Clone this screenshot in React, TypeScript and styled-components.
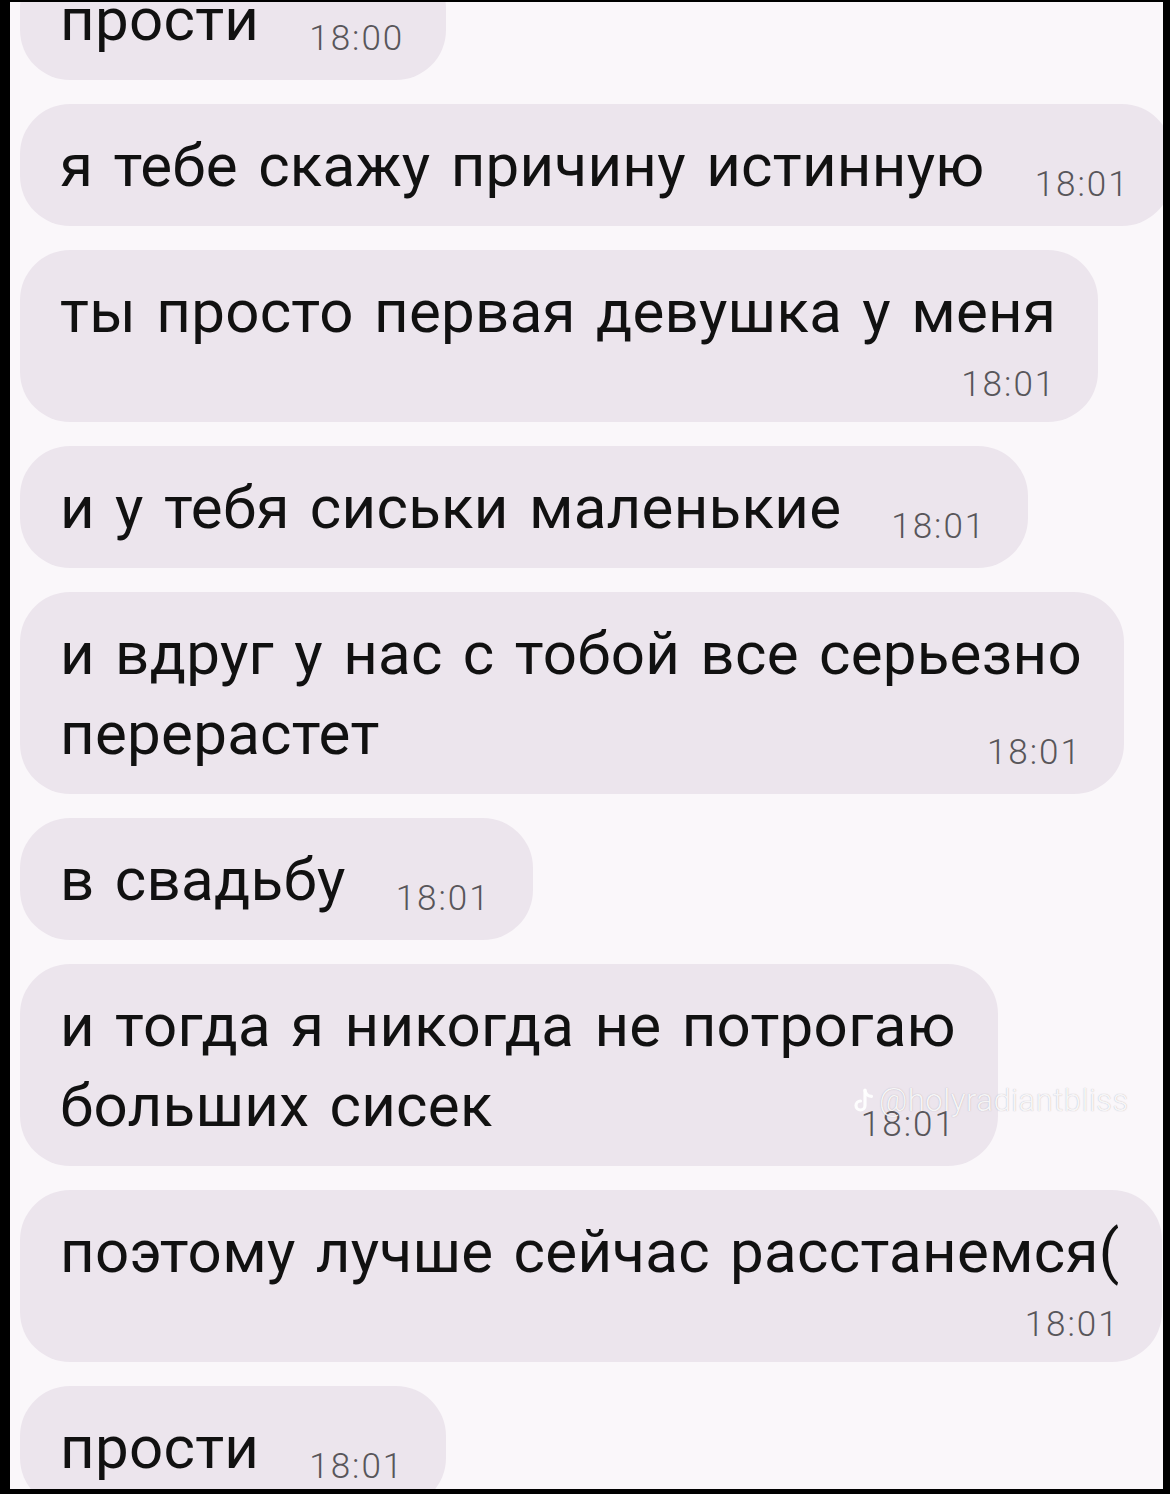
import React from "react";
import styled, { createGlobalStyle } from "styled-components";

const GlobalStyle = createGlobalStyle`
  html, body {
    margin: 0;
    padding: 0;
    background: #000;
  }
  body {
    font-family: Roboto, "Noto Sans", "Liberation Sans", sans-serif;
  }
`;

type Message = {
  lines: string[];
  time: string;
  // where the timestamp sits: after the last line, or on its own row below
  timeAt: "inline" | "below";
};

const messages: Message[] = [
  { lines: ["прости"], time: "18:00", timeAt: "inline" },
  { lines: ["я тебе скажу причину истинную"], time: "18:01", timeAt: "inline" },
  { lines: ["ты просто первая девушка у меня"], time: "18:01", timeAt: "below" },
  { lines: ["и у тебя сиськи маленькие"], time: "18:01", timeAt: "inline" },
  { lines: ["и вдруг у нас с тобой все серьезно", "перерастет"], time: "18:01", timeAt: "inline" },
  { lines: ["в свадьбу"], time: "18:01", timeAt: "inline" },
  { lines: ["и тогда я никогда не потрогаю", "больших сисек"], time: "18:01", timeAt: "inline" },
  { lines: ["поэтому лучше сейчас расстанемся("], time: "18:01", timeAt: "below" },
  { lines: ["прости"], time: "18:01", timeAt: "inline" },
];

const Frame = styled.div`
  width: 1170px;
  height: 1494px;
  box-sizing: border-box;
  padding: 2px 7px 5px 10px;
  background: #000;
`;

const Screen = styled.div`
  position: relative;
  height: 100%;
  overflow: hidden;
  background: #faf7fa;
`;

const Feed = styled.div`
  display: flex;
  flex-direction: column;
  align-items: flex-start;
  gap: 24px;
  margin-top: -44px;
  padding-left: 10px;
`;

const Bubble = styled.div`
  flex-shrink: 0;
  box-sizing: border-box;
  padding: 22px 42px 20px 40px;
  border-radius: 50px;
  background: #ece5ed;
  color: #111;
  white-space: nowrap;
`;

const Line = styled.div`
  display: flex;
  align-items: baseline;
  justify-content: space-between;
  font-size: 60px;
  line-height: 80px;
  letter-spacing: 0.3px;
  word-spacing: 5px;
`;

const Time = styled.span<{ $drop: number }>`
  flex-shrink: 0;
  margin-left: 50px;
  font-size: 35px;
  font-weight: 300;
  letter-spacing: 2px;
  word-spacing: 0;
  line-height: 1;
  color: #58565a;
  transform: translateY(${(p) => p.$drop}px);
`;

const TimeRow = styled.div`
  display: flex;
  justify-content: flex-end;
  align-items: flex-end;
  height: 50px;
`;

const Watermark = styled.div`
  position: absolute;
  left: 842px;
  top: 1080px;
  display: flex;
  align-items: center;
  gap: 3px;
  font-size: 31px;
  font-weight: 300;
  letter-spacing: 0.5px;
  color: rgba(255, 255, 255, 0.9);
  text-shadow: 0 0 1px rgba(110, 100, 115, 0.5);
`;

const NoteLogo = () => (
  <svg width="24" height="26" viewBox="0 0 24 26" fill="none">
    <path
      d="M13 2v15.5a4.5 4.5 0 1 1-4.5-4.5"
      stroke="rgba(255,255,255,0.9)"
      strokeWidth="3.2"
      strokeLinecap="round"
    />
    <path
      d="M13 2.5c.6 3.4 3 5.6 6.5 5.9"
      stroke="rgba(255,255,255,0.9)"
      strokeWidth="3.2"
      strokeLinecap="round"
    />
  </svg>
);

const ChatBubble: React.FC<{ msg: Message }> = ({ msg }) => {
  const last = msg.lines.length - 1;
  return (
    <Bubble>
      {msg.lines.map((text, i) => (
        <Line key={i}>
          <span>{text}</span>
          {i === last && msg.timeAt === "inline" && <Time $drop={10}>{msg.time}</Time>}
        </Line>
      ))}
      {msg.timeAt === "below" && (
        <TimeRow>
          <Time $drop={0}>{msg.time}</Time>
        </TimeRow>
      )}
    </Bubble>
  );
};

export default function App() {
  return (
    <>
      <GlobalStyle />
      <Frame>
        <Screen>
          <Feed>
            {messages.map((m, i) => (
              <ChatBubble key={i} msg={m} />
            ))}
          </Feed>
          <Watermark>
            <NoteLogo />
            <span>@holyradiantbliss</span>
          </Watermark>
        </Screen>
      </Frame>
    </>
  );
}
